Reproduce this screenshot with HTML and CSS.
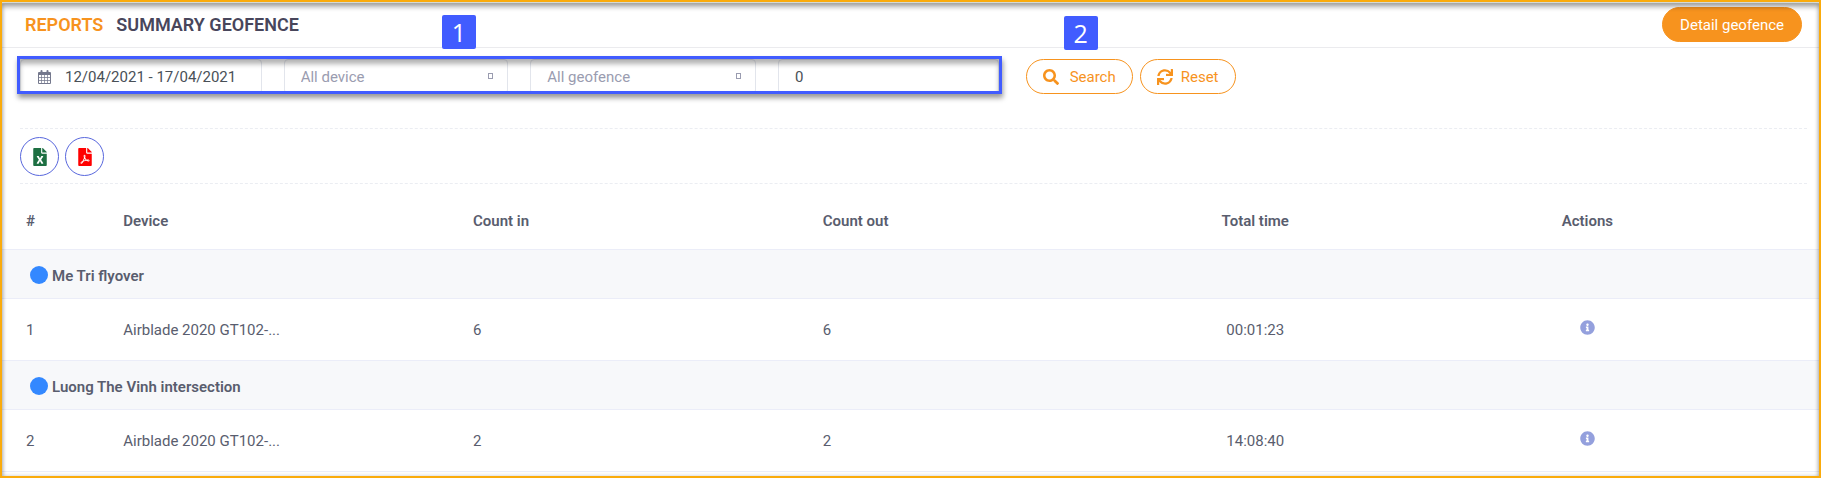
FILE: index.html
```html
<!DOCTYPE html>
<html lang="en">
<head>
<meta charset="utf-8">
<title>Summary geofence</title>
<link rel="stylesheet" href="styles.css">
</head>
<body>
<main class="page">
  <header class="header">
    <h1 class="title"><span class="title-section">REPORTS</span><span>SUMMARY GEOFENCE</span></h1>
    <button class="btn btn-solid" type="button">Detail geofence</button>
  </header>

  <form class="toolbar">
    <div class="filters">
      <span class="marker">1</span>
      <label class="field field-date">
        <svg class="field-icon" viewBox="0 0 13 14" aria-hidden="true"><path fill-rule="evenodd" d="M1 2H2.500V1a1 1 0 0 1 2 0V2H8.500V1a1 1 0 0 1 2 0V2H12a1 1 0 0 1 1 1V13a1 1 0 0 1-1 1H1a1 1 0 0 1-1-1V3a1 1 0 0 1 1-1ZM1 5V7H3.300V5ZM4 5V7H6.200V5ZM6.900 5V7H9V5ZM9.700 5V7H12V5ZM1 7.700V10H3.300V7.700ZM4 7.700V10H6.200V7.700ZM6.900 7.700V10H9V7.700ZM9.700 7.700V10H12V7.700ZM1 10.700V13H3.300V10.700ZM4 10.700V13H6.200V10.700ZM6.900 10.700V13H9V10.700ZM9.700 10.700V13H12V10.700Z"/></svg>
        <input class="control" type="text" value="12/04/2021 - 17/04/2021" aria-label="Date range">
      </label>
      <label class="field field-select">
        <select class="control" aria-label="Device"><option>All device</option></select>
        <span class="caret"></span>
      </label>
      <label class="field field-select">
        <select class="control" aria-label="Geofence"><option>All geofence</option></select>
        <span class="caret"></span>
      </label>
      <label class="field">
        <input class="control" type="text" value="0" aria-label="Minimum count">
      </label>
    </div>
    <div class="actions">
      <span class="marker">2</span>
      <button class="btn btn-outline btn-search" type="button">
        <svg class="btn-icon" viewBox="0 0 512 512" aria-hidden="true"><path d="M505 442.700L405.300 343c-4.500-4.500-10.600-7-17-7H372c27.600-35.300 44-79.700 44-128C416 93.100 322.900 0 208 0S0 93.100 0 208s93.100 208 208 208c48.300 0 92.700-16.400 128-44v16.300c0 6.400 2.500 12.500 7 17l99.700 99.700c9.400 9.400 24.600 9.400 33.900 0l28.300-28.300c9.400-9.400 9.400-24.600.1-34zM208 336c-70.700 0-128-57.200-128-128 0-70.700 57.200-128 128-128 70.700 0 128 57.200 128 128 0 70.700-57.200 128-128 128z"/></svg>
        Search
      </button>
      <button class="btn btn-outline" type="button">
        <svg class="btn-icon" viewBox="0 0 512 512" aria-hidden="true"><path d="M440.650 12.570l4 82.770A247.160 247.160 0 0 0 255.830 8C134.730 8 33.910 94.920 12.290 209.820A12 12 0 0 0 24.090 224h49.050a12 12 0 0 0 11.670-9.260 175.910 175.910 0 0 1 317-56.940l-101.460-4.860a12 12 0 0 0-12.570 12v47.410a12 12 0 0 0 12 12H500a12 12 0 0 0 12-12V12a12 12 0 0 0-12-12h-47.370a12 12 0 0 0-11.980 12.570zM255.830 432a175.610 175.610 0 0 1-146-77.800l101.800 4.870a12 12 0 0 0 12.570-12v-47.400a12 12 0 0 0-12-12H12a12 12 0 0 0-12 12V500a12 12 0 0 0 12 12h47.350a12 12 0 0 0 12-12.600l-4.150-82.570A247.170 247.170 0 0 0 255.830 504c121.110 0 221.930-86.920 243.550-201.820a12 12 0 0 0-11.800-14.180h-49.050a12 12 0 0 0-11.670 9.260A175.860 175.860 0 0 1 255.830 432z"/></svg>
        Reset
      </button>
    </div>
  </form>

  <div class="exports">
    <button class="export export-excel" type="button" aria-label="Export to Excel">
      <svg class="export-icon" viewBox="0 0 384 512" aria-hidden="true"><path d="M224 136V0H24C10.700 0 0 10.700 0 24v464c0 13.300 10.700 24 24 24h336c13.300 0 24-10.700 24-24V160H248c-13.200 0-24-10.800-24-24zm60.100 106.500L224 336l60.100 93.500c5.100 8-.6 18.500-10.100 18.500h-34.900c-4.400 0-8.500-2.400-10.600-6.300C208.900 405.500 192 373 192 373c-6.400 14.800-10 20-36.600 68.800-2.100 3.900-6.100 6.300-10.500 6.300H110c-9.500 0-15.200-10.500-10.100-18.500l60.300-93.500-60.300-93.500c-5.200-8 .6-18.500 10.100-18.500h34.800c4.400 0 8.500 2.400 10.600 6.300 26.100 48.800 20 33.600 36.600 68.500 0 0 6.100-11.700 36.600-68.500 2.100-3.900 6.200-6.300 10.600-6.300H274c9.500-.1 15.200 10.400 10.100 18.400zM384 121.900v6.100H256V0h6.100c6.400 0 12.500 2.500 17 7l97.900 98c4.500 4.500 7 10.600 7 16.900z"/></svg>
    </button>
    <button class="export export-pdf" type="button" aria-label="Export to PDF">
      <svg class="export-icon" viewBox="0 0 384 512" aria-hidden="true"><path d="M181.900 256.100c-5-16-4.900-46.900-2-46.900 8.400 0 7.600 36.900 2 46.900zm-1.700 47.200c-7.700 20.200-17.300 43.300-28.400 62.700 18.300-7 39-17.200 62.900-21.900-12.700-9.600-24.900-23.400-34.500-40.800zM86.100 428.100c0 .8 13.200-5.400 34.900-40.200-6.700 6.300-29.100 24.500-34.900 40.200zM248 160h136v328c0 13.300-10.700 24-24 24H24c-13.300 0-24-10.700-24-24V24C0 10.700 10.700 0 24 0h200v136c0 13.200 10.800 24 24 24zm-8 171.800c-20-12.200-33.300-29-42.700-53.800 4.500-18.500 11.600-46.600 6.200-64.200-4.700-29.400-42.400-26.500-47.800-6.800-5 18.300-.4 44.100 8.100 77-11.600 27.600-28.700 64.600-40.800 85.800-.1 0-.1.1-.2.1-27.100 13.900-73.600 44.500-54.500 68 5.600 6.900 16 10 21.500 10 17.900 0 35.700-18 61.100-61.800 25.800-8.500 54.100-19.100 79-23.200 21.700 11.800 47.100 19.500 64 19.500 29.200 0 31.200-32 19.700-43.400-13.900-13.600-54.300-9.700-73.600-7.200zM377 105L279 7c-4.500-4.500-10.600-7-17-7h-6v128h128v-6.100c0-6.300-2.500-12.400-7-16.900zm-74.100 255.300c4.100-2.700-2.500-11.900-42.800-9 37.100 15.800 42.800 9 42.800 9z"/></svg>
    </button>
  </div>

  <table class="report">
    <colgroup><col class="col-index"><col class="col-device"><col class="col-in"><col class="col-out"><col class="col-time"><col></colgroup>
    <thead>
      <tr><th>#</th><th>Device</th><th>Count in</th><th>Count out</th><th class="center">Total time</th><th class="center">Actions</th></tr>
    </thead>
    <tbody>
      <tr class="group"><th colspan="6" scope="rowgroup"><div class="group-name"><span class="dot"></span>Me Tri flyover</div></th></tr>
      <tr><td>1</td><td>Airblade 2020 GT102-...</td><td>6</td><td>6</td><td class="center">00:01:23</td>
        <td class="center"><button class="info" type="button" aria-label="Details"><svg class="info-icon" viewBox="0 0 512 512"><path d="M256 8C119.043 8 8 119.083 8 256c0 136.997 111.043 248 248 248s248-111.003 248-248C504 119.083 392.957 8 256 8zm0 110c23.196 0 42 18.804 42 42s-18.804 42-42 42-42-18.804-42-42 18.804-42 42-42zm56 254c0 6.627-5.373 12-12 12h-88c-6.627 0-12-5.373-12-12v-24c0-6.627 5.373-12 12-12h12v-64h-12c-6.627 0-12-5.373-12-12v-24c0-6.627 5.373-12 12-12h64c6.627 0 12 5.373 12 12v100h12c6.627 0 12 5.373 12 12v24z"/></svg></button></td></tr>
      <tr class="group"><th colspan="6" scope="rowgroup"><div class="group-name"><span class="dot"></span>Luong The Vinh intersection</div></th></tr>
      <tr><td>2</td><td>Airblade 2020 GT102-...</td><td>2</td><td>2</td><td class="center">14:08:40</td>
        <td class="center"><button class="info" type="button" aria-label="Details"><svg class="info-icon" viewBox="0 0 512 512"><path d="M256 8C119.043 8 8 119.083 8 256c0 136.997 111.043 248 248 248s248-111.003 248-248C504 119.083 392.957 8 256 8zm0 110c23.196 0 42 18.804 42 42s-18.804 42-42 42-42-18.804-42-42 18.804-42 42-42zm56 254c0 6.627-5.373 12-12 12h-88c-6.627 0-12-5.373-12-12v-24c0-6.627 5.373-12 12-12h12v-64h-12c-6.627 0-12-5.373-12-12v-24c0-6.627 5.373-12 12-12h64c6.627 0 12 5.373 12 12v100h12c6.627 0 12 5.373 12 12v24z"/></svg></button></td></tr>
    </tbody>
  </table>
</main>
</body>
</html>
```

FILE: styles.css
```css
* { box-sizing: border-box; }

body {
  margin: 0;
  background: #fff;
  color: #595d6e;
  font: 400 15px/20px Roboto, "Liberation Sans", sans-serif;
}

button, input, select { font: inherit; }

.page {
  position: relative;
  min-height: 100vh;
  border: 2px solid #faab0c;
}

/* Frame shadow falls over the page content */
.page::after {
  content: "";
  position: absolute;
  inset: 0;
  pointer-events: none;
  border-top: 1px solid #d5d9d6;
  box-shadow: inset 0 1px 0 #a9aaa4, inset 0 4px 5px rgba(0, 0, 0, .32), inset 0 0 4px rgba(0, 0, 0, .2);
}

.header {
  display: flex;
  align-items: center;
  justify-content: space-between;
  height: 46px;
  padding: 0 17px 0 23px;
  border-bottom: 1px solid #ebebee;
}

.title {
  display: flex;
  gap: 13px;
  margin: 0;
  color: #48465b;
  font-size: 18px;
  font-weight: 600;
}

.title-section { color: #f7931e; }

.btn {
  display: flex;
  align-items: center;
  gap: 8px;
  height: 35px;
  padding: 0 16px;
  border: 1px solid #f7931e;
  border-radius: 18px;
}

.btn-solid { padding: 0 17px; background: #f7931e; color: #fff; }
.btn-outline { background: #fff; color: #f7931e; }
.btn-search { gap: 11px; }
.btn-icon { width: 16px; height: 16px; fill: currentColor; }

.toolbar {
  display: flex;
  gap: 24px;
  padding: 8px 15px 0;
}

.filters {
  position: relative;
  display: grid;
  grid-template-columns: 242fr 225fr 226fr 221fr;
  gap: 22px;
  width: 55.1%;
  padding: 3px 3px 0;
}

/* Highlight rectangle laid over the fields */
.filters::after {
  content: "";
  position: absolute;
  inset: 0;
  pointer-events: none;
  border: 3px solid #415cff;
  box-shadow: 1px 4px 5px rgba(0, 0, 0, .4), inset 0 5px 5px rgba(0, 0, 0, .3);
}

.marker {
  position: absolute;
  z-index: 1;
  left: 425px;
  bottom: 45px;
  width: 34px;
  height: 34px;
  border-radius: 2px;
  background: #415cff;
  color: #fff;
  font: 400 25px/34px "Open Sans", sans-serif;
  text-align: center;
}

.actions .marker { left: 38px; bottom: 44px; }

.field { position: relative; display: block; min-width: 0; }

.control {
  display: block;
  width: 100%;
  height: 35px;
  padding: 0 16px;
  border: 1px solid #e2e5ec;
  border-radius: 4px;
  background: #fff;
  color: #495057;
  outline: 0;
}

.field-date .control { padding-left: 44px; padding-right: 0; }
.field-select .control { appearance: none; color: #9a9cb0; }

.field-icon {
  position: absolute;
  left: 18px;
  top: 11px;
  width: 13px;
  height: 14px;
  fill: #74788d;
}

.caret {
  position: absolute;
  right: 15px;
  top: 14px;
  width: 5px;
  height: 6px;
  border: 1px solid #9a9cb0;
  pointer-events: none;
}

.actions {
  position: relative;
  display: flex;
  gap: 7px;
  padding-top: 3px;
}

.exports {
  display: flex;
  gap: 6px;
  margin: 34px 12px 0 18px;
  padding: 8px 0 7px;
  border: dashed #ebedf2;
  border-width: 1px 0;
}

.export {
  display: grid;
  place-items: center;
  width: 39px;
  height: 39px;
  padding: 0;
  border: 1px solid #5867dd;
  border-radius: 50%;
  background: #fff;
}

.export-icon { width: 14px; height: 18px; fill: currentColor; }
.export-excel { color: #1d6f42; }
.export-pdf { color: #f00; }

.report {
  width: 100%;
  table-layout: fixed;
  border-collapse: collapse;
}

.col-index { width: 5.35%; }
.col-device, .col-in { width: 19.25%; }
.col-out { width: 19.6%; }
.col-time { width: 11.05%; }

th, td {
  padding: 21px 0 20px 24px;
  text-align: left;
  font-weight: 400;
}

thead th { padding: 27px 0 18px 24px; font-weight: 600; }
tbody th, tbody td { border-top: 1px solid #ebedf8; }
tbody tr:last-child td { border-bottom: 1px solid #ebedf8; }
th.center, td.center { padding-left: 0; text-align: center; }

.group th {
  padding: 16px 0 12px 28px;
  background: #f7f8fa;
  font-weight: 600;
}

.group-name { display: flex; align-items: flex-start; gap: 4px; }

.dot {
  width: 18px;
  height: 18px;
  border-radius: 50%;
  background: #3388ff;
}

.info {
  display: block;
  margin: 0 auto;
  padding: 0 0 5px;
  border: 0;
  background: none;
}

.info-icon { display: block; width: 15px; height: 15px; fill: #94a0dd; }
```
